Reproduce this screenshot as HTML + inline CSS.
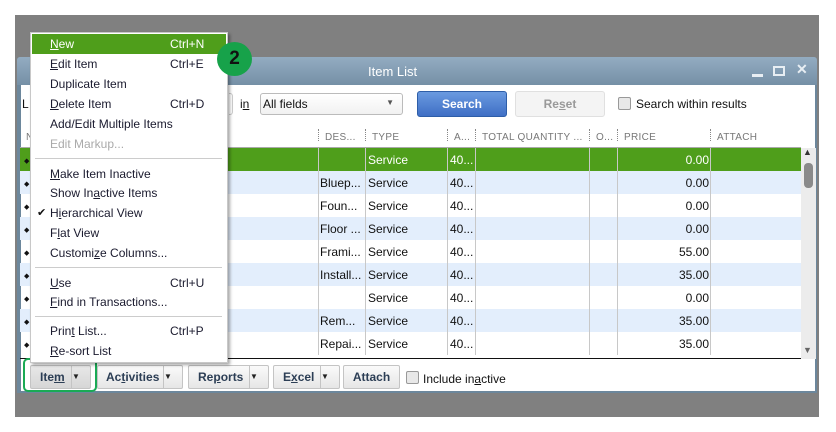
<!DOCTYPE html>
<html><head><style>
*{margin:0;padding:0;box-sizing:border-box}
body{width:836px;height:432px;background:#fff;position:relative;overflow:hidden;font-family:"Liberation Sans",sans-serif;font-size:12px;color:#111}
.a{position:absolute}
u{text-decoration:underline}
.row{position:absolute;left:20px;width:781px;height:23px}
.cell{position:absolute;top:5px;font-size:12px;white-space:nowrap}
.vl{position:absolute;top:148px;height:207px;width:1px;background:#c8c8c8}
.hd{position:absolute;top:132px;font-size:10px;color:#777;letter-spacing:.3px}
.dot{position:absolute;top:129px;height:12px;border-left:1px dotted #888}
.mi{position:absolute;left:50px;font-size:12px;color:#1a1a2e}
.sc{position:absolute;left:170px;font-size:12px;color:#1a1a2e}
.sep{position:absolute;left:35px;width:187px;height:1px;background:#ccc}
.btn{position:absolute;top:365px;height:24px;border:1px solid #c4c4c4;border-radius:2px;background:linear-gradient(#fafafa,#e6e6e6);font-weight:bold;color:#2c3e55;font-size:12px;line-height:22px;text-align:center}
.dd{position:absolute;top:0;right:0;width:19px;height:22px;border-left:1px solid #c4c4c4;font-size:8px;color:#222}
</style></head><body>
<div class="a" style="left:15px;top:15px;width:804px;height:402px;background:#808080"></div>
<!-- window frame -->
<div class="a" style="left:17px;top:57px;width:800px;height:336px;background:#6c879c;border-radius:3px 3px 0 0"></div>
<div class="a" style="left:17px;top:57px;width:800px;height:28px;background:linear-gradient(#93acc1,#7590a6);border-radius:3px 3px 0 0"></div>
<div class="a" style="left:368px;top:64px;color:#fff;font-size:13px">Item List</div>
<div class="a" style="left:752px;top:74px;width:11px;height:3px;background:#e8eef3"></div>
<div class="a" style="left:773px;top:66px;width:12px;height:10px;border:2px solid #e8eef3"></div>
<div class="a" style="left:796px;top:61px;color:#e8eef3;font-size:14px;font-weight:bold">✕</div>
<div class="a" style="left:21px;top:85px;width:794px;height:306px;background:#fff"></div>
<!-- toolbar -->
<div class="a" style="left:22px;top:97px;">L</div>
<div class="a" style="left:229px;top:93px;width:4px;height:22px;border:1px solid #ccc;border-left:none;border-radius:0 3px 3px 0"></div>
<div class="a" style="left:240px;top:97px;"><span>i<u>n</u></span></div>
<div class="a" style="left:260px;top:93px;width:143px;height:22px;border:1px solid #bbb;border-radius:3px;padding:3px 2px;background:linear-gradient(#fff,#f1f1f1)">All fields<span style="position:absolute;right:8px;top:4px;font-size:8px;color:#555">▼</span></div>
<div class="a" style="left:417px;top:91px;width:90px;height:26px;border:1px solid #2e5ea8;border-radius:3px;background:linear-gradient(#6a9ae0,#3f6fc5);color:#fff;font-weight:bold;text-align:center;line-height:24px">Search</div>
<div class="a" style="left:515px;top:91px;width:90px;height:26px;border:1px solid #e0e0e0;border-radius:3px;background:#f4f4f4;color:#999;font-weight:bold;text-align:center;line-height:24px">Re<u>s</u>et</div>
<div class="a" style="left:618px;top:97px;width:13px;height:13px;border:1px solid #999;border-radius:2px;background:#e8e8e8"></div>
<div class="a" style="left:636px;top:97px;">Search within results</div>
<!-- headers -->
<div class="hd" style="left:26px">N</div>
<div class="dot" style="left:318px"></div><div class="hd" style="left:325px">DES...</div>
<div class="dot" style="left:365px"></div><div class="hd" style="left:372px">TYPE</div>
<div class="dot" style="left:447px"></div><div class="hd" style="left:454px">A...</div>
<div class="dot" style="left:475px"></div><div class="hd" style="left:482px">TOTAL QUANTITY ...</div>
<div class="dot" style="left:589px"></div><div class="hd" style="left:596px">O...</div>
<div class="dot" style="left:617px"></div><div class="hd" style="left:624px">PRICE</div>
<div class="dot" style="left:710px"></div><div class="hd" style="left:717px">ATTACH</div>
<!-- rows -->
<div class="row" style="top:148px;background:#4f9e1b;color:#fff"><div class="cell" style="left:348px;color:#fff">Service</div><div class="cell" style="left:430px;color:#fff">40...</div><div class="cell" style="right:92px;color:#fff">0.00</div></div>
<div class="row" style="top:171px;background:#e3eefc"><div class="cell" style="left:300px">Bluep...</div><div class="cell" style="left:348px">Service</div><div class="cell" style="left:430px">40...</div><div class="cell" style="right:92px">0.00</div></div>
<div class="row" style="top:194px"><div class="cell" style="left:300px">Foun...</div><div class="cell" style="left:348px">Service</div><div class="cell" style="left:430px">40...</div><div class="cell" style="right:92px">0.00</div></div>
<div class="row" style="top:217px;background:#e3eefc"><div class="cell" style="left:300px">Floor ...</div><div class="cell" style="left:348px">Service</div><div class="cell" style="left:430px">40...</div><div class="cell" style="right:92px">0.00</div></div>
<div class="row" style="top:240px"><div class="cell" style="left:300px">Frami...</div><div class="cell" style="left:348px">Service</div><div class="cell" style="left:430px">40...</div><div class="cell" style="right:92px">55.00</div></div>
<div class="row" style="top:263px;background:#e3eefc"><div class="cell" style="left:300px">Install...</div><div class="cell" style="left:348px">Service</div><div class="cell" style="left:430px">40...</div><div class="cell" style="right:92px">35.00</div></div>
<div class="row" style="top:286px"><div class="cell" style="left:348px">Service</div><div class="cell" style="left:430px">40...</div><div class="cell" style="right:92px">0.00</div></div>
<div class="row" style="top:309px;background:#e3eefc"><div class="cell" style="left:300px">Rem...</div><div class="cell" style="left:348px">Service</div><div class="cell" style="left:430px">40...</div><div class="cell" style="right:92px">35.00</div></div>
<div class="row" style="top:332px"><div class="cell" style="left:300px">Repai...</div><div class="cell" style="left:348px">Service</div><div class="cell" style="left:430px">40...</div><div class="cell" style="right:92px">35.00</div></div>
<div class="vl" style="left:318px"></div><div class="vl" style="left:365px"></div><div class="vl" style="left:447px"></div><div class="vl" style="left:475px"></div><div class="vl" style="left:589px"></div><div class="vl" style="left:617px"></div><div class="vl" style="left:710px"></div>
<div class="a" style="left:24px;top:157px;font-size:7px">◆</div><div class="a" style="left:24px;top:180px;font-size:7px">◆</div><div class="a" style="left:24px;top:203px;font-size:7px">◆</div><div class="a" style="left:24px;top:226px;font-size:7px">◆</div><div class="a" style="left:24px;top:249px;font-size:7px">◆</div><div class="a" style="left:24px;top:272px;font-size:7px">◆</div><div class="a" style="left:24px;top:295px;font-size:7px">◆</div><div class="a" style="left:24px;top:318px;font-size:7px">◆</div><div class="a" style="left:24px;top:341px;font-size:7px">◆</div>
<div class="a" style="left:20px;top:147px;width:781px;height:1px;background:#aaa"></div>
<div class="a" style="left:20px;top:358px;width:781px;height:1px;background:#111"></div>
<!-- scrollbar -->
<div class="a" style="left:801px;top:148px;width:15px;height:211px;background:#ececec"></div>
<div class="a" style="left:803px;top:147px;font-size:9px;color:#333">▲</div>
<div class="a" style="left:804px;top:163px;width:9px;height:25px;background:#8a8a8a;border-radius:4px"></div>
<div class="a" style="left:803px;top:345px;font-size:9px;color:#666">▼</div>
<!-- bottom buttons -->
<div class="btn" style="left:30px;width:61px;background:linear-gradient(#e8e8e8,#d6d6d6);text-align:left;padding-left:9px">Ite<u>m</u><div class="dd">▼</div></div>
<div class="a" style="left:23px;top:358px;width:74px;height:34px;border:2px solid #1aaa55;border-radius:5px"></div>
<div class="btn" style="left:97px;width:86px;text-align:left;padding-left:8px">Ac<u>t</u>ivities<div class="dd">▼</div></div>
<div class="btn" style="left:188px;width:81px;text-align:left;padding-left:9px">Re<u>p</u>orts<div class="dd">▼</div></div>
<div class="btn" style="left:273px;width:67px;text-align:left;padding-left:9px">E<u>x</u>cel<div class="dd">▼</div></div>
<div class="btn" style="left:343px;width:57px">Attach</div>
<div class="a" style="left:406px;top:371px;width:13px;height:13px;border:1px solid #999;border-radius:2px;background:#e8e8e8"></div>
<div class="a" style="left:423px;top:372px">Include in<u>a</u>ctive</div>
<!-- menu -->
<div class="a" style="left:30px;top:32px;width:198px;height:331px;background:#fff;border:1px solid #c8c8c8;box-shadow:2px 2px 3px rgba(0,0,0,.35)"></div>
<div class="a" style="left:32px;top:34px;width:194px;height:20px;background:#4f9e1b"></div>
<div class="mi" style="top:37px;color:#fff"><u>N</u>ew</div><div class="sc" style="top:37px;color:#fff">Ctrl+N</div>
<div class="mi" style="top:57px"><u>E</u>dit Item</div><div class="sc" style="top:57px">Ctrl+E</div>
<div class="mi" style="top:77px">Duplicate Item</div>
<div class="mi" style="top:97px"><u>D</u>elete Item</div><div class="sc" style="top:97px">Ctrl+D</div>
<div class="mi" style="top:117px">Add/Edit Multiple Items</div>
<div class="mi" style="top:137px;color:#aaa">Edit Markup...</div>
<div class="sep" style="top:158px"></div>
<div class="mi" style="top:167px"><u>M</u>ake Item Inactive</div>
<div class="mi" style="top:186px">Show In<u>a</u>ctive Items</div>
<div class="a" style="left:37px;top:206px;font-size:11px">✔</div>
<div class="mi" style="top:206px">H<u>i</u>erarchical View</div>
<div class="mi" style="top:226px">F<u>l</u>at View</div>
<div class="mi" style="top:246px">Customi<u>z</u>e Columns...</div>
<div class="sep" style="top:267px"></div>
<div class="mi" style="top:276px"><u>U</u>se</div><div class="sc" style="top:276px">Ctrl+U</div>
<div class="mi" style="top:295px"><u>F</u>ind in Transactions...</div>
<div class="sep" style="top:316px"></div>
<div class="mi" style="top:324px">Prin<u>t</u> List...</div><div class="sc" style="top:324px">Ctrl+P</div>
<div class="mi" style="top:344px"><u>R</u>e-sort List</div>
<!-- badge -->
<div class="a" style="left:217px;top:42px;width:35px;height:34px;border-radius:50%;background:#17a24a;color:#111;font-weight:bold;font-size:19px;text-align:center;line-height:34px">2</div>
</body></html>
